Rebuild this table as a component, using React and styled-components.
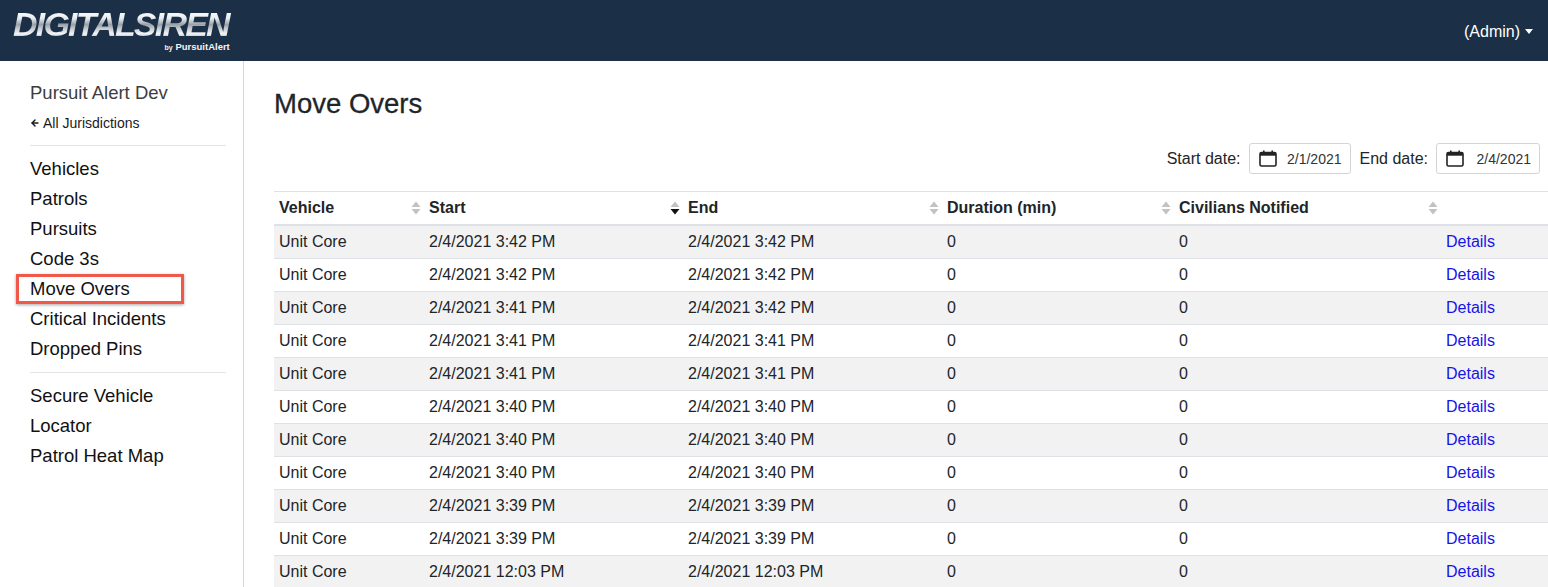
import React from "react";
import styled, { createGlobalStyle } from "styled-components";
import { ArrowLeft } from "lucide-react";

const GlobalStyle = createGlobalStyle`
  html, body {
    margin: 0;
    padding: 0;
    overflow: hidden;
    background: #fff;
  }
  body {
    font-family: "Liberation Sans", Arial, sans-serif;
    color: #212529;
  }
  * { box-sizing: border-box; }
`;

const navGroups = [
  ["Vehicles", "Patrols", "Pursuits", "Code 3s", "Move Overs", "Critical Incidents", "Dropped Pins"],
  ["Secure Vehicle", "Locator", "Patrol Heat Map"],
];

const rows = [
  ["3:42 PM", "3:42 PM"],
  ["3:42 PM", "3:42 PM"],
  ["3:41 PM", "3:42 PM"],
  ["3:41 PM", "3:41 PM"],
  ["3:41 PM", "3:41 PM"],
  ["3:40 PM", "3:40 PM"],
  ["3:40 PM", "3:40 PM"],
  ["3:40 PM", "3:40 PM"],
  ["3:39 PM", "3:39 PM"],
  ["3:39 PM", "3:39 PM"],
  ["12:03 PM", "12:03 PM"],
];

const columns = [
  { label: "Vehicle", width: 150 },
  { label: "Start", width: 259, sorted: true },
  { label: "End", width: 259 },
  { label: "Duration (min)", width: 232 },
  { label: "Civilians Notified", width: 267 },
];

function SortIcon({ active }) {
  return (
    <Styled.Sort viewBox="0 0 10 14" width="10" height="14">
      <path d="M5 0.5 L9.5 6 L0.5 6 Z" fill="#c2c2c2" />
      <path d="M5 13.5 L9.5 8 L0.5 8 Z" fill={active ? "#111" : "#c2c2c2"} />
    </Styled.Sort>
  );
}

function CalendarIcon() {
  return (
    <svg width="18" height="17" viewBox="0 0 18 17">
      <rect x="1" y="2.5" width="16" height="13.5" rx="1.5" fill="none" stroke="#222" strokeWidth="1.6" />
      <rect x="1" y="2.5" width="16" height="3.2" fill="#222" />
      <rect x="4" y="0.5" width="1.6" height="3" fill="#222" />
      <rect x="12.4" y="0.5" width="1.6" height="3" fill="#222" />
    </svg>
  );
}

function DateField({ label, value, width }) {
  return (
    <Styled.DateGroup>
      <span>{label}</span>
      <Styled.DateBox $width={width}>
        <CalendarIcon />
        <span>{value}</span>
      </Styled.DateBox>
    </Styled.DateGroup>
  );
}

function App() {
  return (
    <>
      <GlobalStyle />
      <Styled.Header>
        <Styled.Logo>
          <Styled.LogoWord>DIGITALSIREN</Styled.LogoWord>
          <Styled.LogoBy>
            <small>by</small> PursuitAlert
          </Styled.LogoBy>
        </Styled.Logo>
        <Styled.User>
          (Admin) <Styled.Caret />
        </Styled.User>
      </Styled.Header>
      <Styled.Body>
        <Styled.Sidebar>
          <Styled.Org>Pursuit Alert Dev</Styled.Org>
          <Styled.Back>
            <ArrowLeft size={10} strokeWidth={3.5} /> All Jurisdictions
          </Styled.Back>
          {navGroups.map((group, i) => (
            <React.Fragment key={i}>
              <Styled.Rule />
              {group.map((item) => (
                <Styled.NavItem key={item} $highlighted={item === "Move Overs"}>
                  {item}
                </Styled.NavItem>
              ))}
            </React.Fragment>
          ))}
        </Styled.Sidebar>
        <Styled.Main>
          <Styled.Title>Move Overs</Styled.Title>
          <Styled.Filters>
            <DateField label="Start date:" value="2/1/2021" width={102} />
            <DateField label="End date:" value="2/4/2021" width={104} />
          </Styled.Filters>
          <Styled.Table>
            <colgroup>
              {columns.map((c) => (
                <col key={c.label} style={{ width: c.width }} />
              ))}
              <col />
            </colgroup>
            <thead>
              <tr>
                {columns.map((c) => (
                  <Styled.Th key={c.label}>
                    {c.label}
                    <SortIcon active={c.sorted} />
                  </Styled.Th>
                ))}
                <Styled.Th />
              </tr>
            </thead>
            <tbody>
              {rows.map(([start, end], i) => (
                <Styled.Tr key={i} $striped={i % 2 === 0}>
                  <Styled.Td>Unit Core</Styled.Td>
                  <Styled.Td>2/4/2021 {start}</Styled.Td>
                  <Styled.Td>2/4/2021 {end}</Styled.Td>
                  <Styled.Td>0</Styled.Td>
                  <Styled.Td>0</Styled.Td>
                  <Styled.Td>
                    <Styled.Link href="#">Details</Styled.Link>
                  </Styled.Td>
                </Styled.Tr>
              ))}
            </tbody>
          </Styled.Table>
        </Styled.Main>
      </Styled.Body>
    </>
  );
}

export default App;

const Styled = {
  Header: styled.header`
    height: 61px;
    background: #1b2f46;
    display: flex;
    align-items: center;
    justify-content: space-between;
    padding: 0 15px 0 13px;
  `,
  Logo: styled.div`
    display: flex;
    flex-direction: column;
    align-items: flex-end;
    margin-top: 1px;
  `,
  LogoWord: styled.div`
    font-family: "Liberation Sans", Arial, sans-serif;
    font-weight: 700;
    font-style: italic;
    font-size: 34px;
    line-height: 29px;
    height: 28px;
    overflow: visible;
    letter-spacing: -1.8px;
    padding-right: 3px;
    background: linear-gradient(180deg, #ffffff 0%, #e9ecef 30%, #9aa1a9 52%, #c9ced3 68%, #f3f5f7 85%, #aab0b7 100%);
    -webkit-background-clip: text;
    background-clip: text;
    color: transparent;
  `,
  LogoBy: styled.div`
    font-family: "Liberation Sans", Arial, sans-serif;
    font-weight: 700;
    font-size: 9.5px;
    line-height: 11px;
    color: #f2f4f6;
    margin-top: 3px;
    padding-right: 2px;
    small {
      font-size: 7px;
    }
  `,
  User: styled.div`
    color: #fff;
    font-size: 16px;
    display: flex;
    align-items: center;
    gap: 5px;
    margin-top: 2px;
  `,
  Caret: styled.span`
    width: 0;
    height: 0;
    border-left: 4.5px solid transparent;
    border-right: 4.5px solid transparent;
    border-top: 5px solid #fff;
  `,
  Body: styled.div`
    display: flex;
    height: calc(100vh - 61px);
    overflow: hidden;
  `,
  Sidebar: styled.nav`
    width: 244px;
    flex: none;
    border-right: 1px solid #d6d6d6;
    padding: 20px 17px 0 30px;
    display: flex;
    flex-direction: column;
  `,
  Org: styled.div`
    font-size: 18.5px;
    line-height: 24px;
    color: #3d3d3d;
  `,
  Back: styled.div`
    display: flex;
    align-items: center;
    gap: 3px;
    font-size: 14px;
    line-height: 20px;
    margin-top: 8px;
    color: #1a1a1a;
  `,
  Rule: styled.hr`
    border: 0;
    border-top: 1px solid #e4e4e4;
    margin: 12px 0 8px;
    width: 100%;
    & ~ & {
      margin-top: 8px;
    }
  `,
  NavItem: styled.div`
    position: relative;
    font-size: 18.5px;
    line-height: 30px;
    color: #111;
    ${(p) =>
      p.$highlighted &&
      `
      &::after {
        content: "";
        position: absolute;
        left: -14px;
        top: 0;
        width: 168px;
        height: 30px;
        border: 3px solid #f0584a;
        box-shadow: 0 1px 3px rgba(0, 0, 0, 0.35);
        box-sizing: border-box;
      }
    `}
  `,
  Main: styled.main`
    flex: 1;
    min-width: 0;
    padding: 26px 0 0 30px;
    display: flex;
    flex-direction: column;
  `,
  Title: styled.h1`
    margin: 0;
    font-size: 27.5px;
    font-weight: 400;
    line-height: 34px;
    color: #212529;
    -webkit-text-stroke: 0.3px #212529;
  `,
  Filters: styled.div`
    display: flex;
    justify-content: flex-end;
    gap: 9px;
    margin: 22px 8px 17px 0;
  `,
  DateGroup: styled.label`
    display: flex;
    align-items: center;
    gap: 8px;
    font-size: 16px;
    color: #212529;
  `,
  DateBox: styled.div`
    width: ${(p) => p.$width}px;
    height: 31px;
    border: 1px solid #d4d4d4;
    border-radius: 3px;
    display: flex;
    align-items: center;
    justify-content: space-between;
    padding: 0 8px 0 9px;
    font-size: 14px;
    color: #333;
  `,
  Table: styled.table`
    width: 100%;
    border-collapse: collapse;
    table-layout: fixed;
    font-size: 16px;
  `,
  Th: styled.th`
    position: relative;
    text-align: left;
    font-weight: 700;
    line-height: 24px;
    padding: 4px 5px;
    border-top: 1px solid #dee2e6;
    border-bottom: 2px solid #dee2e6;
    white-space: nowrap;
  `,
  Sort: styled.svg`
    position: absolute;
    right: 3px;
    top: 50%;
    transform: translateY(-50%);
  `,
  Tr: styled.tr`
    background: ${(p) => (p.$striped ? "#f2f2f2" : "#fff")};
  `,
  Td: styled.td`
    line-height: 24px;
    padding: 4px 5px;
    border-top: 1px solid #dee2e6;
    white-space: nowrap;
    color: #212529;
  `,
  Link: styled.a`
    color: #1515e6;
    text-decoration: none;
  `,
};
